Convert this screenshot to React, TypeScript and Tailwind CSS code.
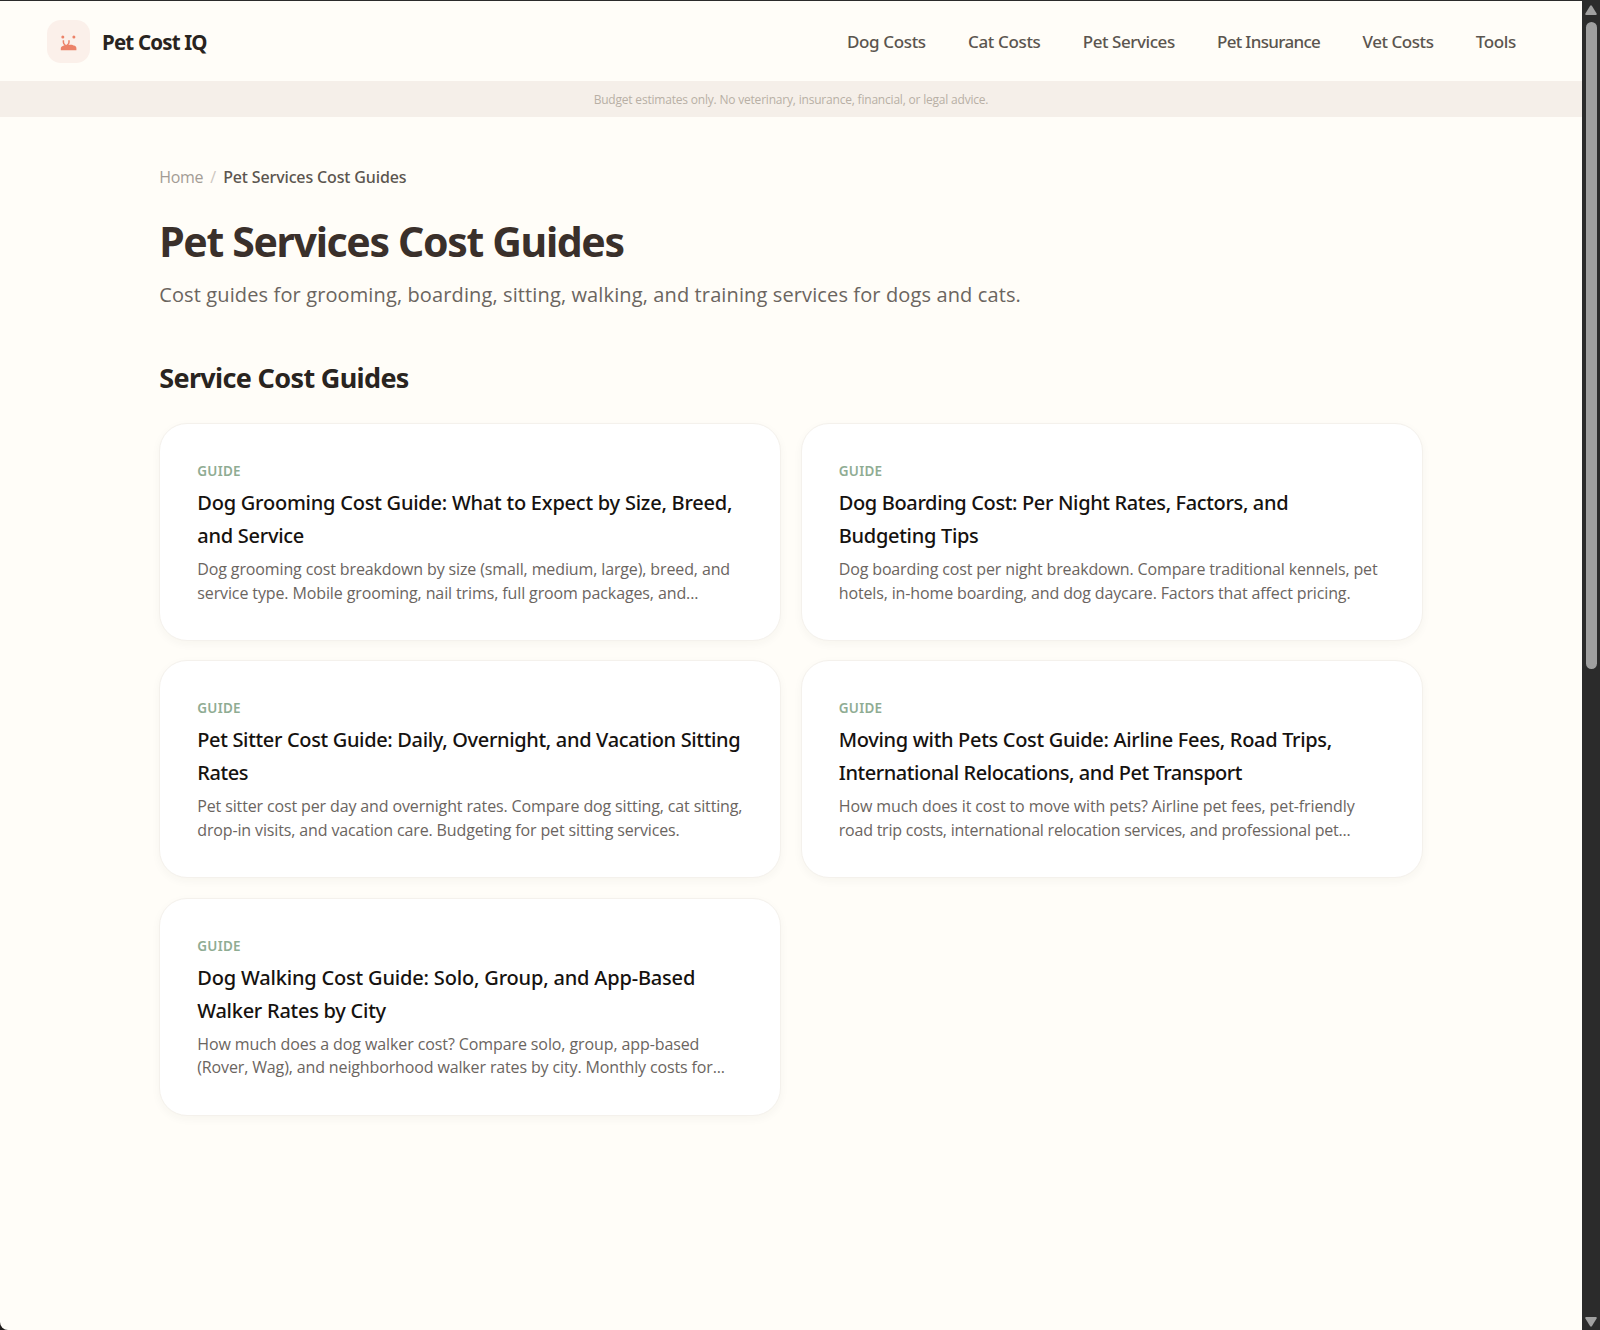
type Line = { text: string; tracking: string };
type Guide = { title: Line[]; summary: Line[] };

const navLinks: Line[] = [
  { text: "Dog Costs", tracking: "tracking-[-0.36px]" },
  { text: "Cat Costs", tracking: "tracking-[-0.35px]" },
  { text: "Pet Services", tracking: "tracking-[-0.45px]" },
  { text: "Pet Insurance", tracking: "tracking-[-0.68px]" },
  { text: "Vet Costs", tracking: "tracking-[-0.45px]" },
  { text: "Tools", tracking: "tracking-[-0.35px]" },
];

const guides: Guide[] = [
  {
    title: [
      { text: "Dog Grooming Cost Guide: What to Expect by Size, Breed,", tracking: "tracking-[-0.23px]" },
      { text: "and Service", tracking: "tracking-[-0.27px]" },
    ],
    summary: [
      { text: "Dog grooming cost breakdown by size (small, medium, large), breed, and", tracking: "tracking-[-0.125px]" },
      { text: "service type. Mobile grooming, nail trims, full groom packages, and...", tracking: "tracking-[-0.115px]" },
    ],
  },
  {
    title: [
      { text: "Dog Boarding Cost: Per Night Rates, Factors, and", tracking: "tracking-[-0.36px]" },
      { text: "Budgeting Tips", tracking: "tracking-[-0.29px]" },
    ],
    summary: [
      { text: "Dog boarding cost per night breakdown. Compare traditional kennels, pet", tracking: "tracking-[-0.145px]" },
      { text: "hotels, in-home boarding, and dog daycare. Factors that affect pricing.", tracking: "tracking-[-0.14px]" },
    ],
  },
  {
    title: [
      { text: "Pet Sitter Cost Guide: Daily, Overnight, and Vacation Sitting", tracking: "tracking-[-0.34px]" },
      { text: "Rates", tracking: "tracking-[-0.4px]" },
    ],
    summary: [
      { text: "Pet sitter cost per day and overnight rates. Compare dog sitting, cat sitting,", tracking: "tracking-[-0.135px]" },
      { text: "drop-in visits, and vacation care. Budgeting for pet sitting services.", tracking: "tracking-[-0.135px]" },
    ],
  },
  {
    title: [
      { text: "Moving with Pets Cost Guide: Airline Fees, Road Trips,", tracking: "tracking-[-0.32px]" },
      { text: "International Relocations, and Pet Transport", tracking: "tracking-[-0.45px]" },
    ],
    summary: [
      { text: "How much does it cost to move with pets? Airline pet fees, pet-friendly", tracking: "tracking-[-0.105px]" },
      { text: "road trip costs, international relocation services, and professional pet...", tracking: "tracking-[-0.225px]" },
    ],
  },
  {
    title: [
      { text: "Dog Walking Cost Guide: Solo, Group, and App-Based", tracking: "tracking-[-0.18px]" },
      { text: "Walker Rates by City", tracking: "tracking-[-0.26px]" },
    ],
    summary: [
      { text: "How much does a dog walker cost? Compare solo, group, app-based", tracking: "tracking-[-0.1px]" },
      { text: "(Rover, Wag), and neighborhood walker rates by city. Monthly costs for...", tracking: "tracking-[-0.135px]" },
    ],
  },
];

function Logo() {
  return (
    <div className="flex items-center gap-[12px]">
      <div className="size-[43px] rounded-[14px] bg-[#fbf0ea]">
        <svg viewBox="0 0 43 43" className="size-full" fill="#ec8268">
          <circle cx="15.8" cy="16.9" r="1.5" />
          <circle cx="26.9" cy="16.9" r="1.5" />
          <path d="M13.8 30.2v-1.6c0-1.4 1-2.300 2.500-2.800l2.300-1h6.400l1.600.8c2 .1 2.800 1.300 2.800 2.900v1.700z" />
          <path
            d="M16.400 20.200v2c0 1.500.6 2.300 1.800 2.800M22 20.200v2c0 1.500-.6 2.300-1.800 2.800"
            fill="none"
            stroke="#ec8268"
            strokeWidth="1.5"
          />
        </svg>
      </div>
      <span className="mt-[1px] whitespace-nowrap text-[20.5px] font-bold leading-[28px] tracking-[-0.83px] text-[#292420]">
        Pet Cost IQ
      </span>
    </div>
  );
}

function GuideCard({ title, summary }: Guide) {
  return (
    <article className="h-[218px] rounded-[28px] border border-[#f4f1ec] bg-white px-[37px] pt-[37px] shadow-[0_3px_10px_rgba(60,45,30,0.04)]">
      <p className="text-[13.5px] font-semibold leading-[20px] tracking-[0.25px] text-[#8fac93]">GUIDE</p>
      <h3 className="mt-[5px] text-[20px] font-medium leading-[33px] text-[#16120f]">
        {title.map((line) => (
          <span key={line.text} className={`block whitespace-nowrap ${line.tracking}`}>
            {line.text}
          </span>
        ))}
      </h3>
      <p className="mt-[6px] font-['Open_Sans','Noto_Sans',sans-serif] text-[16px] leading-[23.5px] text-[#6b655f]">
        {summary.map((line) => (
          <span key={line.text} className={`block whitespace-nowrap ${line.tracking}`}>
            {line.text}
          </span>
        ))}
      </p>
    </article>
  );
}

function Scrollbar() {
  return (
    <div className="flex w-[18px] shrink-0 flex-col items-center bg-[#2b2b2b] pb-[3px] pt-[4px]">
      <svg viewBox="0 0 12 10" className="h-[10px] w-[12px]" fill="#a0a0a0">
        <path d="M5 1Q6-.6 7 1l4.600 7.500Q12 10 11 10H1Q0 10 .4 8.500z" />
      </svg>
      <div className="mt-[7px] h-[647px] w-[11px] rounded-full bg-[#9f9f9f]" />
      <svg viewBox="0 0 12 10" className="mt-auto h-[10px] w-[12px]" fill="#a0a0a0">
        <path d="M5 9Q6 10.600 7 9l4.600-7.500Q12 0 11 0H1Q0 0 .4 1.500z" />
      </svg>
    </div>
  );
}

export default function App() {
  return (
    <div className="flex h-[1330px] w-[1600px] overflow-hidden border-t border-[#2b2b2b] bg-[#1f1c1a] font-['Noto_Sans','Open_Sans',sans-serif]">
      <div className="flex min-w-0 flex-1 flex-col rounded-bl-[8px] bg-[#fffdf8]">
        <header className="flex h-[80px] items-center justify-between pl-[47px] pr-[66px]">
          <Logo />
          <nav className="mt-[1px] flex gap-[42.3px] text-[17px] font-medium leading-[26px] text-[#5b554f]">
            {navLinks.map((link) => (
              <a key={link.text} className={`whitespace-nowrap ${link.tracking}`}>
                {link.text}
              </a>
            ))}
          </nav>
        </header>

        <div className="flex h-[36px] items-center justify-center bg-[#f5efe9] pt-[2px] font-['Open_Sans','Noto_Sans',sans-serif]">
          <p className="whitespace-nowrap text-[12px] leading-[18px] tracking-[-0.2px] text-[#b8afa5]">
            Budget estimates only. No veterinary, insurance, financial, or legal advice.
          </p>
        </div>

        <main className="mx-auto w-[1263.5px] pt-[48px]">
          <nav className="flex gap-[7px] text-[16px] leading-[24px]">
            <a className="font-['Open_Sans','Noto_Sans',sans-serif] tracking-[-0.3px] text-[#a39c95]">Home</a>
            <span className="font-['Open_Sans','Noto_Sans',sans-serif] text-[#cdc7c0]">/</span>
            <span className="font-medium tracking-[-0.14px] text-[#5b554f]">Pet Services Cost Guides</span>
          </nav>
          <h1 className="mt-[27px] whitespace-nowrap text-[41px] font-bold leading-[50px] tracking-[-1.35px] text-[#3a302b]">
            Pet Services Cost Guides
          </h1>
          <p className="mt-[13px] whitespace-nowrap font-['Open_Sans','Noto_Sans',sans-serif] text-[20px] leading-[32px] tracking-[0.12px] text-[#6b655f]">
            Cost guides for grooming, boarding, sitting, walking, and training services for dogs and cats.
          </p>
          <h2 className="mt-[49px] whitespace-nowrap text-[27px] font-bold leading-[36px] tracking-[-0.66px] text-[#292420]">
            Service Cost Guides
          </h2>
          <section className="mt-[27px] grid grid-cols-2 gap-x-[19.5px] gap-y-[19.3px]">
            {guides.map((guide) => (
              <GuideCard key={guide.title[0].text} {...guide} />
            ))}
          </section>
        </main>
      </div>
      <Scrollbar />
    </div>
  );
}
